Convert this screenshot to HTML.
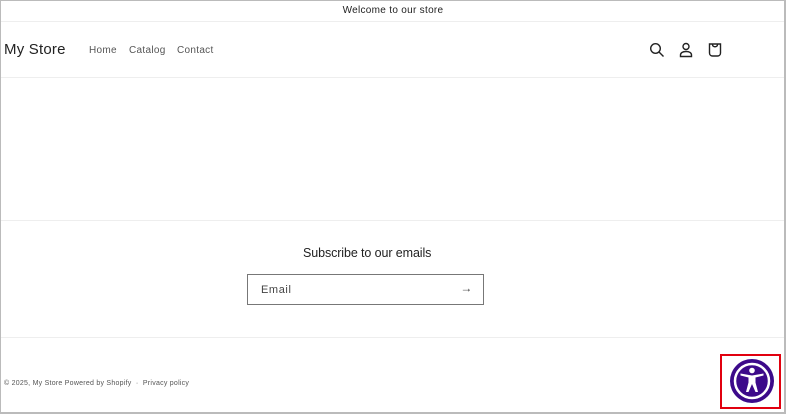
<!DOCTYPE html>
<html><head><meta charset="utf-8"><style>
*{margin:0;padding:0;box-sizing:border-box}
body{width:786px;height:414px;overflow:hidden;background:#fff;font-family:"Liberation Sans",sans-serif;color:#222;position:relative}
.frame{position:absolute;left:0;top:0;width:786px;height:414px;border:1px solid #bbb;border-right:2px solid #bbb;border-bottom:2px solid #bbb}
.ann{position:absolute;top:0;left:0;width:786px;height:22px;border-bottom:1px solid #eee;text-align:center;font-size:10px;line-height:19px;padding-top:1px;color:#222;letter-spacing:0.3px}
.hdr{position:absolute;top:22px;left:0;width:786px;height:56px;border-bottom:1px solid #eee}
.logo{position:absolute;left:4px;top:19px;font-size:15px;color:#222;letter-spacing:0.2px}
.nav{position:absolute;top:23px;font-size:10px;color:#555;letter-spacing:0.3px}
.foot1{position:absolute;top:220px;left:0;width:786px;border-top:1px solid #eee}
.foot2{position:absolute;top:337px;left:0;width:786px;border-top:1px solid #eee}
.sub{position:absolute;top:246px;left:303px;font-size:12.5px;color:#222;letter-spacing:-0.1px;white-space:nowrap}
.email{position:absolute;left:247px;top:274px;width:237px;height:31px;border:1px solid #777;font-size:11px;color:#444;padding:9px 0 0 13px;letter-spacing:0.6px}
.copy{position:absolute;top:380px;left:4px;font-size:7px;color:#555;letter-spacing:0.25px;white-space:nowrap}
.box{position:absolute;left:720px;top:354px;width:61px;height:55px;border:2px solid #e1000f}
</style></head><body>
<div class="ann">Welcome to our store</div>
<div class="hdr">
<div class="logo">My Store</div>
<div class="nav" style="left:89px">Home</div>
<div class="nav" style="left:129px">Catalog</div>
<div class="nav" style="left:177px">Contact</div>
<svg style="position:absolute;left:649px;top:20px" width="16" height="16" viewBox="0 0 16 16" fill="none" stroke="#222" stroke-width="1.4"><circle cx="6.5" cy="6.5" r="4.8"/><path d="M10 10l4.5 4.5"/></svg>
<svg style="position:absolute;left:678px;top:20px" width="16" height="16" viewBox="0 0 16 16" fill="none" stroke="#222" stroke-width="1.4"><circle cx="8" cy="4.5" r="3"/><path d="M2.5 14.5h11v-1.5c0-2-2-3.5-5.5-3.5S2.5 11 2.5 13z"/></svg>
<svg style="position:absolute;left:707px;top:20px" width="16" height="16" viewBox="0 0 16 16" fill="none" stroke="#222" stroke-width="1.4"><path d="M2.5 2h11v9c0 2-1.5 3-3 3h-5c-1.5 0-3-1-3-3z"/><path d="M5.5 2.5c0 3 5 3 5 0"/></svg>
</div>
<div class="foot1"></div>
<div class="sub">Subscribe to our emails</div>
<div class="email">Email<span style="position:absolute;right:10px;top:6px;font-size:12px">→</span></div>
<div class="foot2"></div>
<div class="copy">© 2025, My Store Powered by Shopify &nbsp;·&nbsp; Privacy policy</div>
<div class="box"></div>
<svg style="position:absolute;left:729px;top:358px" width="46" height="46" viewBox="0 0 46 46">
<circle cx="23" cy="23" r="22" fill="#3c0a8a"/>
<circle cx="23" cy="23" r="17" fill="none" stroke="#fff" stroke-width="2.5"/>
<circle cx="23" cy="12.5" r="2.8" fill="#fff"/>
<path d="M11.5 17.5l8 2v5l-2.5 9.5h2.5l3.5-8 3.5 8h2.5l-2.5-9.5v-5l8-2v-2l-11.5 2-11.5-2z" fill="#fff"/>
</svg>
<div class="frame"></div>
</body></html>
